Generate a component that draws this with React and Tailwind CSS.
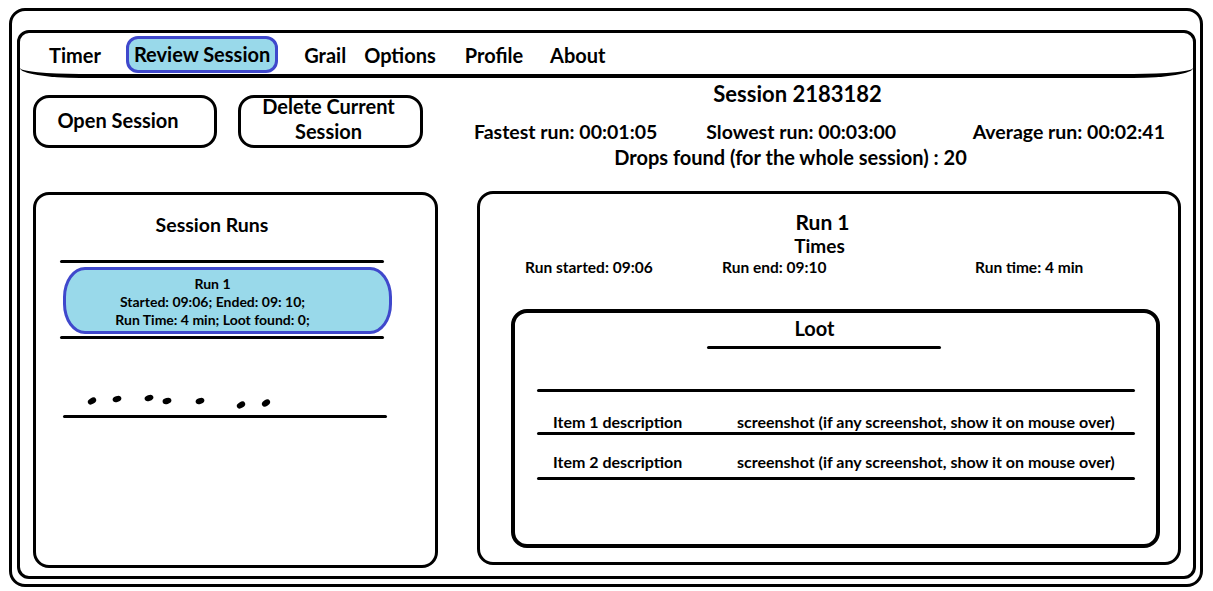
import React from "react";

const navItems = [
    {label: 'Timer', className: 'ml-[29px]'},
    {label: 'Review Session', className: 'ml-[25px]', active: true},
    {label: 'Grail', className: 'ml-[26px]'},
    {label: 'Options', className: 'ml-[18px]'},
    {label: 'Profile', className: 'ml-[29px]'},
    {label: 'About', className: 'ml-[27px]'},
];

const lootItems = [
    {name: 'Item 1 description', screenshot: 'screenshot (if any screenshot, show it on mouse over)', textGap: 'mt-[20px]', lineGap: 'mt-0'},
    {name: 'Item 2 description', screenshot: 'screenshot (if any screenshot, show it on mouse over)', textGap: 'mt-[17px]', lineGap: 'mt-[5px]'},
];

function Line({className = ''}) {
    return <div className={`h-[3px] rounded-full bg-black ${className}`}></div>;
}

function Scribbles() {
    // hand drawn dots of the mockup
    const dots = [[6, 7, -30], [31, 5, -20], [63, 4, -20], [81, 7, -15], [114, 7, -20], [155, 11, -30], [180, 9, -35]];
    return (
        <svg width="190" height="16" viewBox="0 0 190 16" className="ml-[26px]">
            {dots.map(([x, y, r], i) => (
                <ellipse key={i} cx={x} cy={y} rx="4.5" ry="3" transform={`rotate(${r} ${x} ${y})`} fill="#000"/>
            ))}
        </svg>
    );
}

export default function App() {
    return (
        <div className="w-[1213px] h-[591px] bg-white pt-[8px] pl-[9px] text-black"
             style={{fontFamily: 'Lato, "Open Sans", sans-serif'}}>
            <div className="w-[1194px] h-[579px] border-[3px] border-black rounded-[16px] pt-[19px] pl-[5px] pr-[4px] pb-[5px]">
                <div className="h-full border-[3px] border-black rounded-[12px] flex flex-col">
                    <nav className="h-[45px] flex items-center border-b-[4px] border-black rounded-b-[60px_10px] text-[20px] font-bold shrink-0 pt-[3px]">
                        {navItems.map((item) => (
                            item.active ? (
                                <span key={item.label}
                                      className={`${item.className} bg-[#99d9ea] border-[3px] border-[#3f48cc] rounded-[12px] px-[5px] h-[37px] flex items-center mt-[-2px]`}>
                                    {item.label}
                                </span>
                            ) : (
                                <span key={item.label} className={item.className}>{item.label}</span>
                            )
                        ))}
                    </nav>

                    <div className="flex flex-1 pl-[13px] pr-[12px] pb-[10px]">
                        <div className="w-[405px] flex flex-col shrink-0">
                            <div className="flex gap-[21px] mt-[17px] h-[53px] text-[20px] font-bold">
                                <button className="w-[184px] h-[53px] border-[3px] border-black rounded-[16px] pb-[4px] pr-[14px]">
                                    Open Session
                                </button>
                                <button className="w-[185px] h-[53px] border-[3px] border-black rounded-[16px] leading-[25px] pr-[4px]">
                                    <span className="block mt-[-6px]">Delete Current<br/>Session</span>
                                </button>
                            </div>

                            <div className="mt-[44px] h-[376px] border-[3px] border-black rounded-[16px] pt-[15px] pl-[24px]">
                                <div className="text-[19.5px] font-bold text-center w-[310px] ml-[-3px]">Session Runs</div>
                                <Line className="w-[324px] mt-[21px]"/>
                                <div className="w-[329px] h-[67px] ml-[3px] mt-[4px] bg-[#99d9ea] border-[3px] border-[#3f48cc] rounded-[22px_/_30px] flex flex-col items-center justify-center text-[14px] font-bold leading-[18px] pt-[2px] pr-[30px]">
                                    <div>Run 1</div>
                                    <div>Started: 09:06; Ended: 09: 10;</div>
                                    <div>Run Time: 4 min; Loot found: 0;</div>
                                </div>
                                <Line className="w-[324px] mt-[2px]"/>
                                <div className="mt-[55px]"><Scribbles/></div>
                                <Line className="w-[324px] mt-[5px] ml-[3px]"/>
                            </div>
                        </div>

                        <div className="flex-1 flex flex-col ml-[39px]">
                            <div className="h-[113px] relative">
                                <div className="absolute left-[-3px] top-[3px] w-[691px] flex flex-col font-bold">
                                    <div className="text-[22px] text-center pr-[44px] leading-[26px]">Session 2183182</div>
                                    <div className="flex text-[19.5px] mt-[14px] leading-[22px]">
                                        <span>Fastest run: 00:01:05</span>
                                        <span className="ml-[49px]">Slowest run: 00:03:00</span>
                                        <span className="ml-auto">Average run: 00:02:41</span>
                                    </div>
                                    <div className="text-[20px] text-center pr-[58px] mt-[3px] leading-[22px]">
                                        Drops found (for the whole session) : 20
                                    </div>
                                </div>
                            </div>

                            <div className="h-[374px] w-[704px] border-[3px] border-black rounded-[16px] pt-[16px] px-[32px] flex flex-col">
                                <div className="text-center font-bold text-[21px] leading-[24px] pr-[13px]">Run 1</div>
                                <div className="text-center font-bold text-[19px] leading-[24px] pr-[19px]">Times</div>
                                <div className="flex text-[15.5px] font-bold leading-[18px] ml-[13px]">
                                    <span className="w-[197px]">Run started: 09:06</span>
                                    <span className="w-[253px]">Run end: 09:10</span>
                                    <span>Run time: 4 min</span>
                                </div>

                                <div className="mt-[33px] h-[239px] w-[649px] ml-[-1px] border-[4px] border-black rounded-[16px] pt-[3px] px-[22px]">
                                    <div className="text-center font-bold text-[20px] leading-[24px] pr-[42px]">Loot</div>
                                    <Line className="w-[234px] mx-auto mt-[6px] relative left-[-12px]"/>
                                    <Line className="w-[598px] mt-[40px]"/>
                                    {lootItems.map((item) => (
                                        <div key={item.name}>
                                            <div className={`flex text-[16px] font-bold leading-[20px] pl-[16px] ${item.textGap}`}>
                                                <span className="w-[184px]">{item.name}</span>
                                                <span>{item.screenshot}</span>
                                            </div>
                                            <Line className={`w-[598px] ${item.lineGap}`}/>
                                        </div>
                                    ))}
                                </div>
                            </div>
                        </div>
                    </div>
                </div>
            </div>
        </div>
    );
}
